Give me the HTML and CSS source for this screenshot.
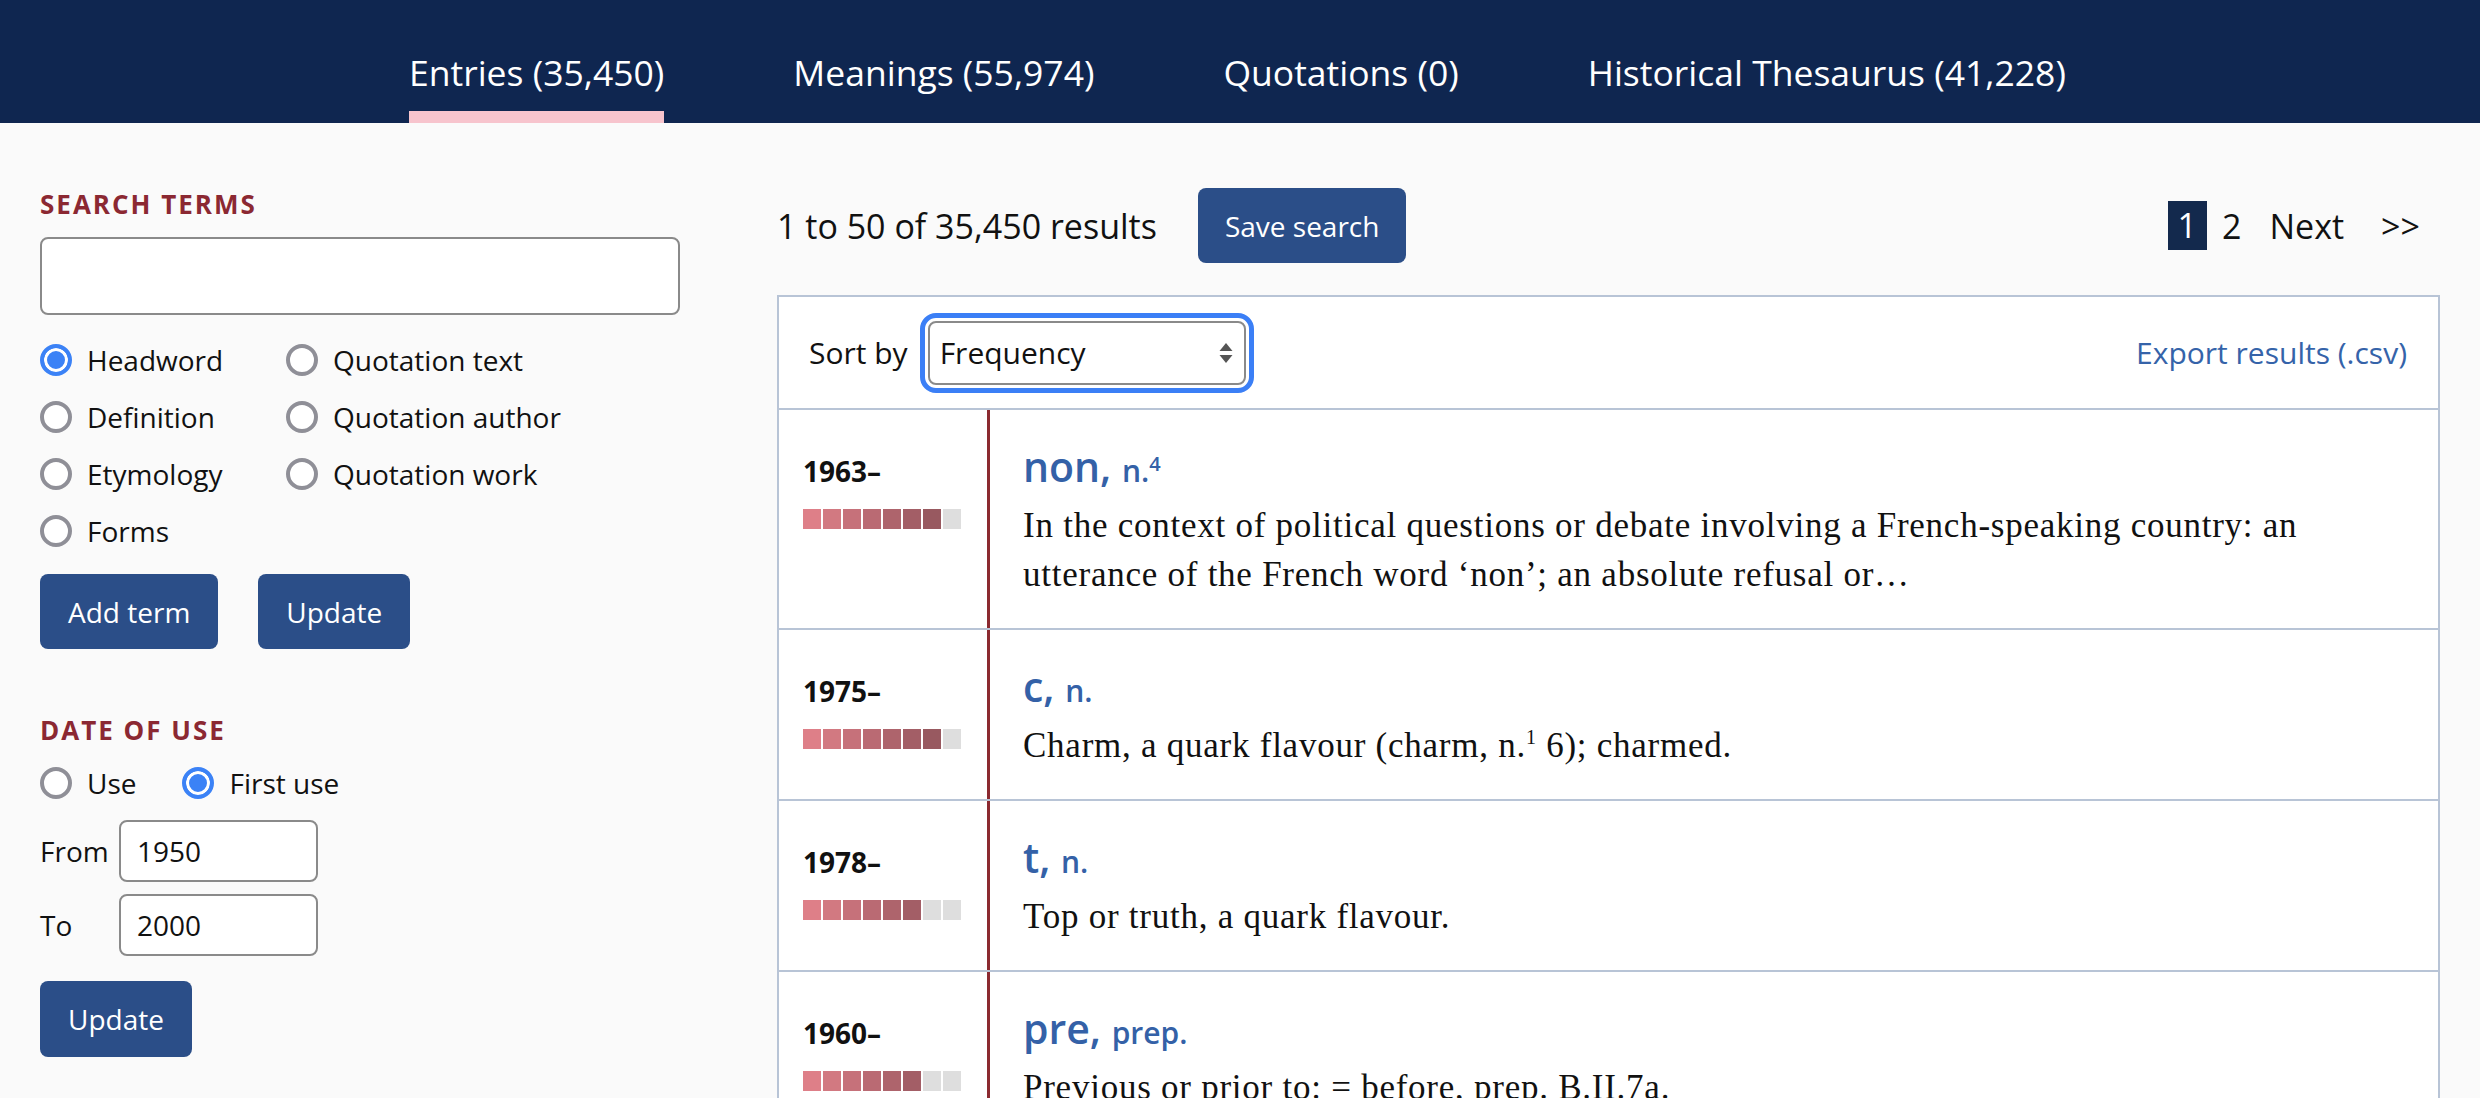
FILE: index.html
```html
<!DOCTYPE html>
<html lang="en">
<head>
<meta charset="utf-8">
<title>Advanced search results</title>
<link rel="stylesheet" href="styles.css">
</head>
<body>
<header class="topbar">
  <nav class="tabs">
    <a class="tab active" href="#">Entries (35,450)</a>
    <a class="tab" href="#">Meanings (55,974)</a>
    <a class="tab" href="#">Quotations (0)</a>
    <a class="tab" href="#">Historical Thesaurus (41,228)</a>
  </nav>
</header>
<div class="page">
  <aside class="sidebar">
    <h2 class="section-title">Search terms</h2>
    <input class="text-input search-input" type="text" aria-label="Search terms">
    <div class="radio-grid">
      <label class="radio"><input type="radio" name="field" checked><span>Headword</span></label>
      <label class="radio"><input type="radio" name="field"><span>Quotation text</span></label>
      <label class="radio"><input type="radio" name="field"><span>Definition</span></label>
      <label class="radio"><input type="radio" name="field"><span>Quotation author</span></label>
      <label class="radio"><input type="radio" name="field"><span>Etymology</span></label>
      <label class="radio"><input type="radio" name="field"><span>Quotation work</span></label>
      <label class="radio"><input type="radio" name="field"><span>Forms</span></label>
    </div>
    <div class="btn-row">
      <button class="btn" type="button">Add term</button>
      <button class="btn" type="button">Update</button>
    </div>
    <h2 class="section-title date-title">Date of use</h2>
    <div class="radio-row">
      <label class="radio"><input type="radio" name="use"><span>Use</span></label>
      <label class="radio"><input type="radio" name="use" checked><span>First use</span></label>
    </div>
    <div class="date-grid">
      <label class="date-label" for="from">From</label>
      <input class="text-input date-input" id="from" type="text" value="1950">
      <label class="date-label" for="to">To</label>
      <input class="text-input date-input" id="to" type="text" value="2000">
    </div>
    <button class="btn date-update" type="button">Update</button>
  </aside>

  <main class="results">
    <div class="results-head">
      <span class="count">1 to 50 of 35,450 results</span>
      <button class="btn save-btn" type="button">Save search</button>
      <div class="pager">
        <span class="page-current">1</span>
        <a class="page-link page-two" href="#">2</a>
        <a class="page-link page-next" href="#">Next</a>
        <a class="page-link page-last" href="#">&gt;&gt;</a>
      </div>
    </div>

    <div class="card">
      <div class="card-head">
        <span class="sort-label">Sort by</span>
        <div class="select-wrap">
          <select class="sort-select" aria-label="Sort by">
            <option>Frequency</option>
            <option>Alphabetical</option>
            <option>Date</option>
          </select>
          <svg class="select-arrows" width="14" height="20" viewBox="0 0 14 20" aria-hidden="true">
            <path d="M7 0 L13.5 8 L0.5 8 Z" fill="#555"/>
            <path d="M7 20 L13.5 12 L0.5 12 Z" fill="#555"/>
          </svg>
        </div>
        <a class="export" href="#">Export results (.csv)</a>
      </div>

      <div class="entry">
        <div class="entry-date">
          <div class="year">1963–</div>
          <div class="freq">
            <i class="f1"></i><i class="f2"></i><i class="f3"></i><i class="f4"></i><i class="f5"></i><i class="f6"></i><i class="f7"></i><i class="f0"></i>
          </div>
        </div>
        <div class="entry-body">
          <div class="headword">non, <span class="pos">n.<sup>4</sup></span></div>
          <p class="def">In the context of political questions or debate involving a French-speaking country: an utterance of the French word ‘non’; an absolute refusal or…</p>
        </div>
      </div>

      <div class="entry">
        <div class="entry-date">
          <div class="year">1975–</div>
          <div class="freq">
            <i class="f1"></i><i class="f2"></i><i class="f3"></i><i class="f4"></i><i class="f5"></i><i class="f6"></i><i class="f7"></i><i class="f0"></i>
          </div>
        </div>
        <div class="entry-body">
          <div class="headword">c, <span class="pos">n.</span></div>
          <p class="def">Charm, a quark flavour (charm, n.<sup class="dsup">1</sup> 6); charmed.</p>
        </div>
      </div>

      <div class="entry">
        <div class="entry-date">
          <div class="year">1978–</div>
          <div class="freq">
            <i class="f1"></i><i class="f2"></i><i class="f3"></i><i class="f4"></i><i class="f5"></i><i class="f6"></i><i class="f0"></i><i class="f0"></i>
          </div>
        </div>
        <div class="entry-body">
          <div class="headword">t, <span class="pos">n.</span></div>
          <p class="def">Top or truth, a quark flavour.</p>
        </div>
      </div>

      <div class="entry">
        <div class="entry-date">
          <div class="year">1960–</div>
          <div class="freq">
            <i class="f1"></i><i class="f2"></i><i class="f3"></i><i class="f4"></i><i class="f5"></i><i class="f6"></i><i class="f0"></i><i class="f0"></i>
          </div>
        </div>
        <div class="entry-body">
          <div class="headword">pre, <span class="pos">prep.</span></div>
          <p class="def">Previous or prior to: = before, prep. B.II.7a.</p>
        </div>
      </div>
    </div>
  </main>
</div>
</body>
</html>
```

FILE: styles.css
```css
* { box-sizing: border-box; }

html, body {
  margin: 0;
  padding: 0;
}

body {
  background: #fafafa;
  font-family: "Open Sans", "Noto Sans", "Liberation Sans", sans-serif;
  color: #111;
}

/* ---------- top tabs ---------- */
.topbar {
  background: #0f2650;
}

.tabs {
  display: flex;
  gap: 129px;
  padding-left: 409px;
}

.tab {
  display: block;
  padding: 48px 0 14px;
  line-height: 49px;
  font-size: 35.5px;
  color: #fff;
  text-decoration: none;
  border-bottom: 12px solid transparent;
}

.tab.active {
  border-bottom-color: #f7c4cd;
}

/* ---------- layout ---------- */
.page {
  display: flex;
  padding: 0 40px;
}

.sidebar {
  width: 640px;
  flex: none;
  padding-top: 63px;
  display: flex;
  flex-direction: column;
  align-items: flex-start;
}

.results {
  flex: 1;
  margin-left: 97px;
  padding-top: 65px;
  min-width: 0;
}

/* ---------- sidebar ---------- */
.section-title {
  margin: 0;
  font-size: 26px;
  line-height: 36px;
  font-weight: 700;
  letter-spacing: 2px;
  text-transform: uppercase;
  color: #8b2832;
}

.text-input {
  font-family: inherit;
  font-size: 28px;
  color: #111;
  background: #fff;
  border: 2px solid #8a8a8a;
  border-radius: 8px;
  outline: none;
}

.search-input {
  margin-top: 15px;
  width: 640px;
  height: 78px;
  padding: 0 16px;
}

.radio-grid {
  margin-top: 16px;
  display: grid;
  grid-template-columns: 246px auto;
  grid-auto-rows: 57px;
}

.radio {
  display: flex;
  align-items: center;
  gap: 15px;
  font-size: 28px;
  cursor: pointer;
}

.radio input {
  appearance: none;
  -webkit-appearance: none;
  margin: 0;
  width: 32px;
  height: 32px;
  flex: none;
  border: 4px solid #8f8f97;
  border-radius: 50%;
  background: #fff;
}

.radio input:checked {
  border-color: #3b82f6;
  background: #3b82f6;
  box-shadow: inset 0 0 0 3px #fff;
}

.btn-row {
  margin-top: 15px;
  display: flex;
  gap: 40px;
}

.btn {
  height: 75px;
  padding: 0 28px;
  font-family: inherit;
  font-size: 28px;
  color: #fff;
  background: #2b4e88;
  border: 0;
  border-radius: 8px;
  cursor: pointer;
}

.date-title {
  margin-top: 63px;
}

.radio-row {
  margin-top: 6px;
  height: 57px;
  display: flex;
  gap: 46px;
}

.date-grid {
  margin-top: 9px;
  display: grid;
  grid-template-columns: 79px 199px;
  row-gap: 12px;
  align-items: center;
}

.date-label {
  font-size: 28px;
}

.date-input {
  width: 199px;
  height: 62px;
  padding: 0 16px;
}

.date-update {
  margin-top: 25px;
  height: 76px;
}

/* ---------- results header ---------- */
.results-head {
  display: flex;
  align-items: center;
  height: 75px;
}

.count {
  font-size: 34px;
}

.save-btn {
  margin-left: 41px;
  padding: 0 27px;
}

.pager {
  margin-left: auto;
  margin-right: 20px;
  display: flex;
  align-items: center;
  font-size: 34px;
}

.page-current {
  display: block;
  height: 49px;
  line-height: 49px;
  padding: 0 10px;
  background: #13294d;
  color: #fff;
}

.page-link {
  color: #111;
  text-decoration: none;
}

.page-two { margin-left: 15px; }
.page-next { margin-left: 28px; }
.page-last { margin-left: 37px; }

/* ---------- results card ---------- */
.card {
  margin-top: 32px;
  background: #fff;
  border: 2px solid #b8c4d6;
}

.card-head {
  display: flex;
  align-items: center;
  height: 111px;
  padding: 0 31px 0 30px;
  font-size: 30px;
}

.select-wrap {
  position: relative;
  margin-left: 20px;
}

.sort-select {
  appearance: none;
  -webkit-appearance: none;
  display: block;
  width: 318px;
  height: 64px;
  padding: 0 40px 0 10px;
  font-family: inherit;
  font-size: 30px;
  color: #111;
  background: #fff;
  border: 2px solid #8a8a8a;
  border-radius: 8px;
  outline: 5px solid #3b7ff6;
  outline-offset: 3px;
}

.select-arrows {
  position: absolute;
  right: 13px;
  top: 22px;
  pointer-events: none;
}

.export {
  margin-left: auto;
  color: #3563a9;
  text-decoration: none;
}

.entry {
  display: grid;
  grid-template-columns: 208px 1fr;
  border-top: 2px solid #b8c4d6;
}

.entry-date {
  padding: 32px 0 0 24px;
}

.year {
  font-size: 28px;
  font-weight: 700;
  line-height: 58px;
}

.freq {
  margin-top: 9px;
  display: flex;
  gap: 2px;
}

.freq i {
  display: block;
  width: 18px;
  height: 20px;
}

.freq .f1 { background: #de7f88; }
.freq .f2 { background: #d27981; }
.freq .f3 { background: #c6717a; }
.freq .f4 { background: #ba6a73; }
.freq .f5 { background: #ae646c; }
.freq .f6 { background: #a35e66; }
.freq .f7 { background: #985960; }
.freq .f0 { background: #dedede; }

.entry-body {
  border-left: 3px solid #8b2a30;
  padding: 27px 60px 29px 33px;
}

.headword {
  font-size: 41px;
  font-weight: 600;
  line-height: 58px;
  color: #3461a7;
}

.pos {
  font-size: 30px;
  line-height: 1;
}

.pos sup {
  font-size: 20px;
  line-height: 0;
}

.def {
  margin: 6px 0 0;
  font-family: "Liberation Serif", "Times New Roman", serif;
  font-size: 35px;
  line-height: 49px;
  letter-spacing: 0.75px;
  color: #111;
}

.dsup {
  font-size: 20px;
  line-height: 0;
}
```
